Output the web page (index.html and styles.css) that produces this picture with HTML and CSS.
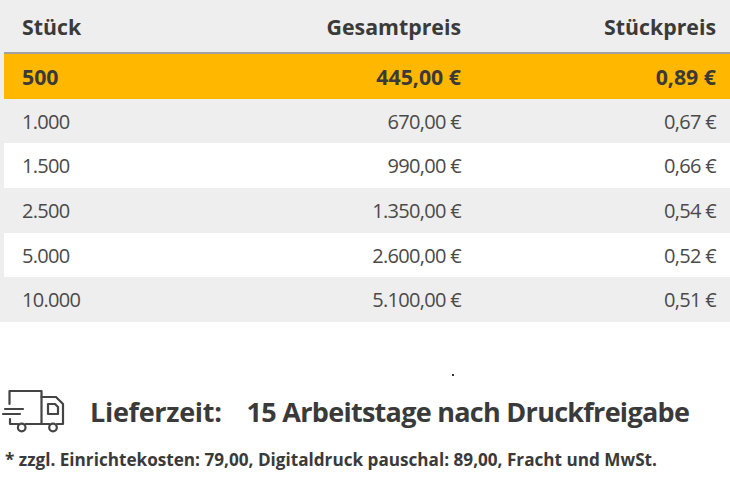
FILE: index.html
```html
<!DOCTYPE html>
<html lang="de">
<head>
<meta charset="utf-8">
<title>Preise</title>
<link rel="stylesheet" href="styles.css">
</head>
<body>
<div class="prices">
  <div class="row head">
    <div class="c1">Stück</div>
    <div class="c2">Gesamtpreis</div>
    <div class="c3">Stückpreis</div>
  </div>
  <div class="row active">
    <div class="c1">500</div>
    <div class="c2">445,00 €</div>
    <div class="c3">0,89 €</div>
  </div>
  <div class="row odd">
    <div class="c1">1.000</div>
    <div class="c2">670,00 €</div>
    <div class="c3">0,67 €</div>
  </div>
  <div class="row even">
    <div class="c1">1.500</div>
    <div class="c2">990,00 €</div>
    <div class="c3">0,66 €</div>
  </div>
  <div class="row odd">
    <div class="c1">2.500</div>
    <div class="c2">1.350,00 €</div>
    <div class="c3">0,54 €</div>
  </div>
  <div class="row even">
    <div class="c1">5.000</div>
    <div class="c2">2.600,00 €</div>
    <div class="c3">0,52 €</div>
  </div>
  <div class="row odd">
    <div class="c1">10.000</div>
    <div class="c2">5.100,00 €</div>
    <div class="c3">0,51 €</div>
  </div>
</div>
<div class="dotline"><span class="dot"></span></div>
<div class="delivery">
  <svg class="truck" width="66" height="50" viewBox="0 0 66 50" fill="none" stroke="#444" stroke-width="2.2" stroke-linecap="round" stroke-linejoin="round">
    <path d="M9.5 18 V5 H41.5 V38"/>
    <path d="M41.5 11 H56 L63 18 V38 H57"/>
    <path d="M25.5 38 H49.5"/>
    <circle cx="21.7" cy="41.5" r="3.8"/>
    <circle cx="53" cy="41.5" r="3.8"/>
    <path d="M48 18 H55 L58 21 V28 H48 Z"/>
    <path d="M5 23 H23"/>
    <path d="M3 28 H20"/>
    <path d="M10 33 V38 H18"/>
  </svg>
  <span class="label">Lieferzeit:</span>
  <span class="value">15 Arbeitstage nach Druckfreigabe</span>
</div>
<p class="note">* zzgl. Einrichtekosten: 79,00, Digitaldruck pauschal: 89,00, Fracht und MwSt.</p>
</body>
</html>
```
FILE: styles.css
```css
html, body {
  margin: 0;
  padding: 0;
  background: #ffffff;
}
body {
  font-family: "Open Sans", "Noto Sans", sans-serif;
  color: #3c3c3c;
  width: 730px;
}
.prices {
  background: #eeeeee;
  padding-left: 4px;
}
.row {
  display: grid;
  grid-template-columns: 239px 200px 255px;
  align-items: center;
  padding: 0 14px 0 18px;
  height: 44.7px;
  font-size: 20px;
  letter-spacing: -0.7px;
  color: #4a4a4a;
}
.row .c2, .row .c3 {
  text-align: right;
}
.row.head {
  height: 52px;
  border-bottom: 2px solid #a2a2a2;
  font-weight: 700;
  font-size: 21.3px;
  letter-spacing: 0;
  color: #3a3a3a;
}
.row.active {
  background: #ffb700;
  font-weight: 700;
  font-size: 21.3px;
  letter-spacing: 0;
  color: #3a3a3a;
}
.row.odd {
  background: #eeeeee;
}
.row.even {
  background: #ffffff;
}
.dotline {
  height: 2px;
  margin-top: 52px;
  padding-left: 452px;
}
.dot {
  display: block;
  width: 2px;
  height: 2px;
  background: #333;
}
.delivery {
  display: flex;
  align-items: center;
  margin-top: 10px;
  height: 50px;
}
.truck {
  display: block;
}
.label {
  margin-left: 24px;
  font-weight: 700;
  font-size: 27px;
  letter-spacing: -0.3px;
  color: #3a3a3a;
}
.value {
  margin-left: 25px;
  font-weight: 700;
  font-size: 27px;
  letter-spacing: -0.72px;
  color: #3a3a3a;
}
.note {
  margin: 12px 0 0 5px;
  font-weight: 700;
  font-size: 17.15px;
  letter-spacing: 0;
  color: #3a3a3a;
}
```
